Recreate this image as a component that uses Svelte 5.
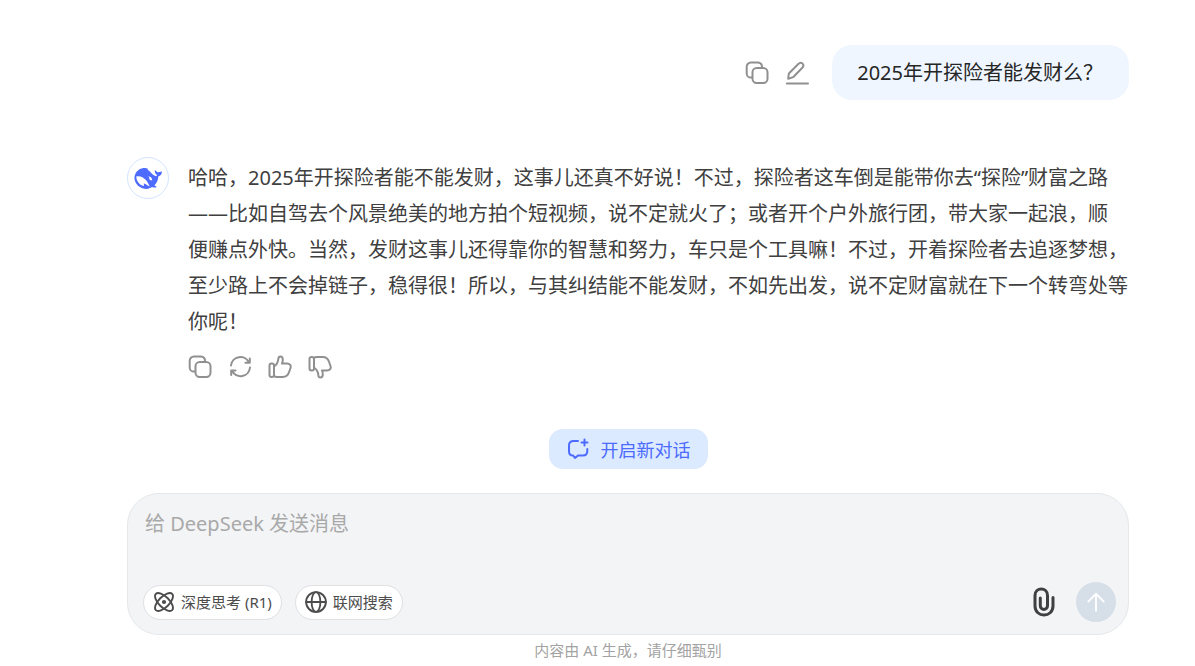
<script lang="ts">
	let question = '2025年开探险者能发财么？';
	let message = '';
	let deepThink = false;
	let webSearch = false;
</script>

{#snippet copyIcon()}
	<svg viewBox="0 0 24 24" aria-hidden="true">
		<rect x="7.500" y="7" width="15" height="15" rx="4.200" />
		<path d="M7 16.600H5.900a4.200 4.200 0 0 1-4.200-4.200V5.800a4.200 4.200 0 0 1 4.200-4.200h6.800c2 0 3.600 1.100 4.200 2.900V7" />
	</svg>
{/snippet}

{#snippet thumbIcon()}
	<rect x="1.500" y="8.500" width="4.500" height="13.500" rx="2" />
	<path d="M6 11.500c2.800-1.900 4.100-4.400 4.300-7.500.1-1.500.8-2.600 2-2.600 1.700 0 2.500 1.700 2.500 3.400 0 1.500-.3 2.500-.8 3.800h5c2.900 0 4.300 1.900 3.500 4.400l-1.300 3.800c-1.100 3.500-3.200 5.200-6.600 5.200H9c-1.200 0-2.200-.3-3-1" />
{/snippet}

<main class="chat">
	<section class="question">
		<div class="actions">
			<button class="icon" aria-label="复制">{@render copyIcon()}</button>
			<button class="icon" aria-label="编辑">
				<svg viewBox="0 0 24 24" aria-hidden="true">
					<path d="M1.800 22.500h21.200" />
					<path d="M3.200 17.800l.5-4.300c.1-.7.4-1.300.9-1.800l8.700-8.700c1.300-1.300 3-1.500 4.200-.4 1.200 1.200 1 2.900-.2 4.200l-8.700 8.900c-.5.5-1.100.8-1.800.9z" />
				</svg>
			</button>
		</div>
		<div class="bubble">{question}</div>
	</section>

	<section class="answer">
		<div class="avatar">
			<svg viewBox="0 0 28 28" aria-hidden="true">
				<path d="M27.600 7.500c-1.500.7-2.400.2-3.700 1-1.300-.8-2.100-1.800-2.900-2.500-.6 1.900.1 4.100 2 5-.4 1.300-.9 1.500-2.200.8-3.100-1.600-4.500-4.900-7.300-6.100.5-.6.7-.8.300-1C9.800 3 3.500 4.900 1.200 10.200c-2.400 5.600 1.200 12.600 8 14.300 3.500.9 6.600.2 8.800-1.400 1.600.7 3.700.6 4.400.1.400-.6-.9-1.100-2.100-1.600 2.200-2.400 3.800-4.900 4.100-9.300 2.200-.3 3.400-2.200 3.500-4.500zM15.800 22.400c-2.500-.5-4-2.400-5.800-2.800-1 .5.6 1.400-.1 2.300C5.600 21.400 2 16.700 2.400 12.300c4.100-.7 7.800 1.300 10 4.300 1.400 2.100 2.300 4.200 3.400 5.800zM18.200 16.200c-2 .6-3.100-.5-2.900-2 .1-1-.4-1.500-1.400-1.500 1.900-1 4.200 1 4.300 3.500z" />
			</svg>
		</div>
		<div class="content">
			<p>
				哈哈，2025年开探险者能不能发财，这事儿还真不好说！不过，探险者这车倒是能带你去“探险”财富之路——比如自驾去个风景绝美的地方拍个短视频，说不定就火了；或者开个户外旅行团，带大家一起浪，顺<br />便赚点外快。当然，发财这事儿还得靠你的智慧和努力，车只是个工具嘛！不过，开着探险者去追逐梦想，至少路上不会掉链子，稳得很！所以，与其纠结能不能发财，不如先出发，说不定财富就在下一个转弯处等你呢！
			</p>
			<div class="actions">
				<button class="icon" aria-label="复制">{@render copyIcon()}</button>
				<button class="icon" aria-label="重新生成">
					<svg viewBox="0 0 24 24" aria-hidden="true">
						<path d="M3 10.500A9.500 9.500 0 0 1 21 7.500M21.800 3.500V7.700H17.500" />
						<path d="M22 12.500A9.500 9.500 0 0 1 4 15.800M3.200 20V15.600H7.500" />
					</svg>
				</button>
				<button class="icon" aria-label="喜欢">
					<svg viewBox="0 0 24 24" aria-hidden="true">
						{@render thumbIcon()}
					</svg>
				</button>
				<button class="icon" aria-label="不喜欢">
					<svg class="flipped" viewBox="0 0 24 24" aria-hidden="true">
						{@render thumbIcon()}
					</svg>
				</button>
			</div>
		</div>
	</section>

	<button class="new-chat">
		<svg viewBox="0 0 24 24" aria-hidden="true">
			<path d="M12 4H7.500C4.700 4 3 5.700 3 8.500v5.700c0 2.800 1.500 4.300 4.200 4.400L9 21l3-2.600h4.800c2.800 0 4.500-1.700 4.500-4.500V12" />
			<path d="M18.500 2.500v6M15.500 5.500h6" />
		</svg>
		开启新对话
	</button>

	<form class="composer" on:submit|preventDefault>
		<textarea rows="1" aria-label="消息" placeholder="给 DeepSeek 发送消息" bind:value={message}></textarea>
		<div class="toolbar">
			<button type="button" class="chip" aria-pressed={deepThink} on:click={() => (deepThink = !deepThink)}>
				<svg viewBox="0 0 24 24" aria-hidden="true">
					<ellipse cx="12" cy="12" rx="5.800" ry="12.600" transform="rotate(45 12 12)" />
					<ellipse cx="12" cy="12" rx="5.800" ry="12.600" transform="rotate(-45 12 12)" />
					<circle class="dot" cx="12" cy="12" r="2.300" />
				</svg>
				深度思考 (R1)
			</button>
			<button type="button" class="chip" aria-pressed={webSearch} on:click={() => (webSearch = !webSearch)}>
				<svg viewBox="0 0 24 24" aria-hidden="true">
					<circle cx="12" cy="12" r="10.800" />
					<ellipse cx="12" cy="12" rx="4.800" ry="10.800" />
					<path d="M1.200 12h21.600" />
				</svg>
				联网搜索
			</button>
			<button type="button" class="attach" aria-label="上传附件">
				<svg viewBox="0 0 22 30" aria-hidden="true">
					<path d="M7.300 11v7.800c0 4.800 7.200 4.800 7.200 0V8.500c0-8.600-12.500-8.600-12.500 0V19c0 12 18 12 18 0v-8.500" />
				</svg>
			</button>
			<button type="submit" class="send" aria-label="发送">
				<svg viewBox="0 0 24 24" aria-hidden="true">
					<path d="M12 21.500V3M3.500 11.500L12 3l8.500 8.500" />
				</svg>
			</button>
		</div>
	</form>

	<footer>内容由 AI 生成，请仔细甄别</footer>
</main>

<style>
	:global(body) {
		margin: 0;
		background: #fff;
	}

	.chat {
		display: flex;
		flex-direction: column;
		padding: 45px 66px 0 127px;
		font-family: 'Noto Sans', 'Noto Sans CJK SC', sans-serif;
		font-size: 20px;
		color: #404040;
	}

	button,
	textarea {
		margin: 0;
		padding: 0;
		border: 0;
		background: none;
		font: inherit;
		color: inherit;
	}

	button {
		cursor: pointer;
	}

	svg {
		display: block;
		flex: none;
		fill: none;
		stroke: currentColor;
		stroke-width: 2;
		stroke-linecap: round;
		stroke-linejoin: round;
	}

	.question {
		display: flex;
		justify-content: flex-end;
		align-items: center;
		gap: 23px;
	}

	.actions {
		display: flex;
		gap: 16px;
		color: #909090;
	}

	.icon,
	.icon svg {
		width: 24px;
		height: 24px;
	}

	.flipped {
		transform: scaleY(-1);
	}

	.bubble {
		padding: 10px 26px 10px 25px;
		border-radius: 20px;
		background: #eff6ff;
		color: #262626;
		line-height: 35px;
	}

	.answer {
		display: flex;
		align-items: flex-start;
		gap: 19px;
		margin-top: 57px;
	}

	.avatar {
		display: flex;
		flex: none;
		align-items: center;
		justify-content: center;
		box-sizing: border-box;
		width: 42px;
		height: 42px;
		border: 1px solid #d5e4ff;
		border-radius: 50%;
	}

	.avatar svg {
		width: 28px;
		height: 28px;
		fill: #4d6bfe;
		stroke: none;
	}

	.content {
		flex: 1;
		padding-top: 3px;
	}

	p {
		margin: 0 0 15px;
		line-height: 36px;
	}

	.new-chat {
		display: flex;
		align-self: center;
		align-items: center;
		gap: 11px;
		height: 40px;
		margin-top: 50px;
		padding: 0 17px;
		border-radius: 14px;
		background: #dbeafe;
		color: #4d6bfe;
		font-size: 18px;
	}

	.new-chat svg {
		width: 24px;
		height: 24px;
	}

	.composer {
		display: flex;
		flex-direction: column;
		gap: 40px;
		margin-top: 24px;
		padding: 12px 12px 12px 15px;
		border: 1px solid #e5e7eb;
		border-radius: 32px;
		background: #f3f4f6;
	}

	textarea {
		height: 36px;
		padding-left: 2px;
		line-height: 36px;
		outline: none;
		resize: none;
		overflow: hidden;
	}

	textarea::placeholder {
		color: #a9a9a9;
		opacity: 1;
	}

	.toolbar {
		display: flex;
		align-items: center;
		gap: 13px;
	}

	.chip {
		display: flex;
		align-items: center;
		gap: 6px;
		height: 35px;
		padding: 0 9px;
		border: 1px solid #dfe0e2;
		border-radius: 18px;
		background: #fff;
		color: #4c4c4c;
		font-size: 15px;
		line-height: 20px;
	}

	.chip svg {
		width: 22px;
		height: 22px;
	}

	.dot {
		fill: currentColor;
		stroke: none;
	}

	.attach {
		margin-left: auto;
		padding: 0 8px;
	}

	.attach svg {
		width: 22px;
		height: 30px;
		stroke-width: 3;
	}

	.send {
		display: flex;
		align-items: center;
		justify-content: center;
		width: 40px;
		height: 40px;
		border-radius: 50%;
		background: #d6dee8;
		color: #fff;
	}

	.send svg {
		width: 22px;
		height: 22px;
	}

	footer {
		margin-top: 4px;
		line-height: 22px;
		text-align: center;
		font-size: 15px;
		color: #a3a3a3;
	}
</style>
